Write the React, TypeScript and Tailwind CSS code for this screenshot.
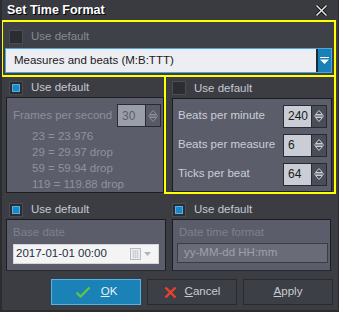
import React from "react";

const font = { fontFamily: '"Liberation Sans", Arial, sans-serif' };

function Check({ on, className = "" }: { on?: boolean; className?: string }) {
  return (
    <div className={`shrink-0 w-[14px] h-[14px] border border-[#4b4d55] bg-[#2c2d32] p-[2px] ${className}`}>
      {on && <div className="w-full h-full bg-[#1888c8] border border-[#56b0e4]" />}
    </div>
  );
}

function SpinArrows({ dim }: { dim?: boolean }) {
  const c = dim ? "#8b8f99" : "#c9cdd5";
  return (
    <svg width="10" height="16" viewBox="0 0 10 16">
      <path d="M1.5 6.5 L5 2.5 L8.5 6.5 Z" fill="none" stroke={c} strokeWidth="1" />
      <path d="M1.5 9.5 L5 13.5 L8.5 9.5 Z" fill="none" stroke={c} strokeWidth="1" />
      <line x1="0" y1="8" x2="10" y2="8" stroke={c} strokeWidth="1" />
    </svg>
  );
}

function Spinner({ value, dim }: { value: string; dim?: boolean }) {
  return (
    <div className="shrink-0 flex h-[23px] w-[44px] border border-[#2a2b30]">
      <div
        className={`flex-1 flex items-center pl-[4px] text-[12px] ${
          dim ? "bg-[#9a9ea8] text-[#5a5e68]" : "bg-[#c9cdd5] text-[#1b1c20]"
        }`}
      >
        {value}
      </div>
      <div className={`w-[15px] flex items-center justify-center border-l border-[#2a2b30] ${dim ? "bg-[#585b66]" : "bg-[#4a4d57]"}`}>
        <SpinArrows dim={dim} />
      </div>
    </div>
  );
}

function Label({ children, className = "" }: { children: React.ReactNode; className?: string }) {
  return <span className={`text-[11.5px] leading-none whitespace-nowrap ${className}`}>{children}</span>;
}

export default function App() {
  return (
    <div className="w-[339px] h-[312px] bg-[#3c3d43] flex flex-col border-l-2 border-r border-b-2 border-[#2b2c30] overflow-hidden" style={font}>
      {/* title */}
      <div className="shrink-0 h-[20px] flex items-center justify-between pl-[5px] pr-[10px] bg-[#3a3b40]">
        <span className="text-[12.5px] font-bold text-white [text-shadow:1px_1px_0_#000]">Set Time Format</span>
        <svg width="13" height="13" viewBox="0 0 13 13">
          <path d="M1.5 1.5 L11.5 11.5 M11.5 1.5 L1.5 11.5" stroke="#000" strokeWidth="3" />
          <path d="M1.5 1.5 L11.5 11.5 M11.5 1.5 L1.5 11.5" stroke="#e4e4e4" strokeWidth="1.6" />
        </svg>
      </div>

      {/* top yellow group */}
      <div className="shrink-0 -ml-[1px] w-[335px] h-[57px] border-2 border-[#ffff00] bg-[#3f4148] pt-[8px] pl-[2px]">
        <div className="flex items-center gap-[8px] ml-[4px]">
          <Check />
          <Label className="text-[#868b95]">Use default</Label>
        </div>
        <div className="mt-[4px] w-[327px] h-[25px] flex border border-[#4ba6e0] bg-[#eceef1]">
          <div className="flex-1 flex items-center pl-[8px] text-[11.5px] text-[#1a1a1d]">Measures and beats (M:B:TTT)</div>
          <div className="w-[15px] flex items-center justify-center bg-[#1a80b8] border-l-2 border-[#1f2a33]">
            <svg width="9" height="8" viewBox="0 0 9 8">
              <rect x="0" y="0" width="9" height="1" fill="#fff" />
              <path d="M0 2.5 L9 2.5 L4.5 7 Z" fill="#fff" />
            </svg>
          </div>
        </div>
      </div>

      {/* middle row */}
      <div className="shrink-0 flex h-[119px] -mt-[2px]">
        <div className="w-[158px] ml-[4px] pt-[6px] flex flex-col">
          <div className="flex items-center gap-[8px] ml-[3px] h-[14px]">
            <Check on />
            <Label className="text-[#c3c9d3]">Use default</Label>
          </div>
          <div className="mt-[2px] h-[96px] border border-[#1c1d21] bg-[#5b5e6a] pl-[6px] pr-[2px] pt-[6px]">
            <div className="flex items-center justify-between">
              <Label className="text-[#8c909a]">Frames per second</Label>
              <Spinner value="30" dim />
            </div>
            <div className="flex flex-col pl-[19px] mt-[1px] text-[11.5px] text-[#8e929c] leading-[16px]">
              <span>23 = 23.976</span>
              <span>29 = 29.97 drop</span>
              <span>59 = 59.94 drop</span>
              <span>119 = 119.88 drop</span>
            </div>
          </div>
        </div>
        <div className="w-[172px] border-2 border-[#ffff00] pl-[6px] pr-[2px] pt-[4px] flex flex-col">
          <div className="flex items-center gap-[8px] h-[15px]">
            <Check />
            <Label className="text-[#c3c9d3]">Use default</Label>
          </div>
          <div className="mt-[2px] h-[96px] border border-[#1c1d21] bg-[#5b5e6a] pl-[5px] pr-[4px] pt-[6px] flex flex-col gap-[6px]">
            <div className="flex items-center justify-between">
              <Label className="text-[#c9ced7]">Beats per minute</Label>
              <Spinner value="240" />
            </div>
            <div className="flex items-center justify-between">
              <Label className="text-[#c9ced7]">Beats per measure</Label>
              <Spinner value="6" />
            </div>
            <div className="flex items-center justify-between">
              <Label className="text-[#c9ced7]">Ticks per beat</Label>
              <Spinner value="64" />
            </div>
          </div>
        </div>
      </div>

      {/* bottom row */}
      <div className="shrink-0 flex pt-[9px]">
        <div className="w-[160px] ml-[4px] flex flex-col">
          <div className="flex items-center gap-[8px] ml-[3px] h-[14px]">
            <Check on />
            <Label className="text-[#c3c9d3]">Use default</Label>
          </div>
          <div className="mt-[2px] h-[52px] border border-[#1c1d21] border-b-[#2a2b30] bg-[#5b5e6a] px-[6px] pt-[7px] flex flex-col">
            <Label className="text-[#7d818b]">Base date</Label>
            <div className="mt-[5px] h-[20px] w-[146px] bg-[#f4f4f4] border border-[#d4d6da] flex items-center pl-[2px] text-[11.5px] text-[#22303f]">
              <span className="flex-1">2017-01-01 00:00</span>
              <svg width="12" height="12" viewBox="0 0 12 12" className="mr-[2px]">
                <rect x="0.5" y="0.5" width="10" height="11" fill="#f0f0f0" stroke="#b8bcc2" />
                <path d="M2 3 H9 M2 5 H9 M2 7 H9 M2 9 H9 M3.5 2 V10.5 M5.5 2 V10.5 M7.5 2 V10.5" stroke="#c8ccd2" strokeWidth="0.8" />
              </svg>
              <svg width="7" height="4" viewBox="0 0 7 4" className="mr-[7px]">
                <path d="M0 0 L7 0 L3.5 4 Z" fill="#b0b4ba" />
              </svg>
            </div>
          </div>
        </div>
        <div className="w-[159px] ml-[6px] flex flex-col">
          <div className="flex items-center gap-[8px] h-[14px]">
            <Check on />
            <Label className="text-[#c3c9d3]">Use default</Label>
          </div>
          <div className="mt-[2px] h-[52px] border border-[#1c1d21] border-b-[#2a2b30] bg-[#5b5e6a] px-[4px] pt-[7px] flex flex-col">
            <Label className="text-[#7d818b] ml-[2px]">Date time format</Label>
            <div className="mt-[4px] h-[20px] w-[151px] bg-[#696c77] border border-[#3a3c43] flex items-center pl-[6px] text-[11.5px] text-[#9da1ab]">
              yy-MM-dd HH:mm
            </div>
          </div>
        </div>
      </div>

      {/* buttons */}
      <div className="shrink-0 flex justify-end gap-[6px] pr-[5px] mt-[8px]">
        <button className="w-[90px] h-[26px] bg-[#1a82b6] border border-[#4fb6ec] flex items-center justify-center gap-[10px] text-[11.5px] text-[#eaf1f6]">
          <svg width="16" height="12" viewBox="0 0 16 12">
            <path d="M1.5 6.5 L5.5 10.5 L14.5 1.5" fill="none" stroke="#5fc24a" strokeWidth="2.4" />
          </svg>
          <span><span className="underline">O</span>K</span>
        </button>
        <button className="w-[90px] h-[26px] bg-[#3d3f47] border border-[#2a2b30] flex items-center justify-center gap-[8px] text-[11.5px] text-[#c8ccd4]">
          <svg width="13" height="13" viewBox="0 0 13 13">
            <path d="M1.5 1.5 L11.5 11.5 M11.5 1.5 L1.5 11.5" stroke="#e8432c" strokeWidth="2.4" />
          </svg>
          <span><span className="underline">C</span>ancel</span>
        </button>
        <button className="w-[90px] h-[26px] bg-[#3d3f47] border border-[#2a2b30] flex items-center justify-center text-[11.5px] text-[#c8ccd4]">
          <span><span className="underline">A</span>pply</span>
        </button>
      </div>
    </div>
  );
}
